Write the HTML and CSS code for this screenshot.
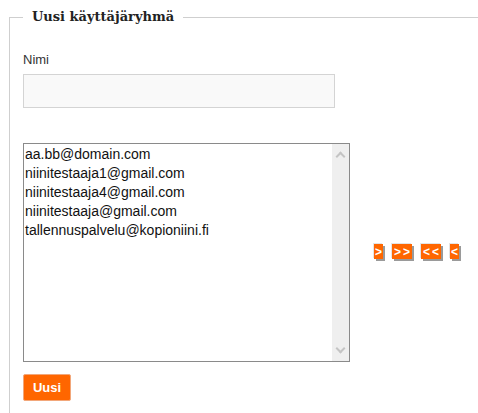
FILE: index.html
```html
<!DOCTYPE html>
<html lang="fi">
<head>
    <meta charset="UTF-8">
    <title>Uusi käyttäjäryhmä</title>
    <link rel="stylesheet" href="styles.css">
</head>
<body>
    <fieldset class="group-form">
        <legend>Uusi käyttäjäryhmä</legend>

        <label class="field-label" for="nimi">Nimi</label>
        <input class="text-input" id="nimi" type="text">

        <div class="member-row">
            <div class="member-list">
                <ul class="members">
                    <li>aa.bb@domain.com</li>
                    <li>niinitestaaja1@gmail.com</li>
                    <li>niinitestaaja4@gmail.com</li>
                    <li>niinitestaaja@gmail.com</li>
                    <li>tallennuspalvelu@kopioniini.fi</li>
                </ul>
                <div class="scrollbar">
                    <span class="arrow up"></span>
                    <span class="arrow down"></span>
                </div>
            </div>

            <div class="move-buttons">
                <button class="move-btn single">&gt;</button>
                <button class="move-btn double">&gt;&gt;</button>
                <button class="move-btn double">&lt;&lt;</button>
                <button class="move-btn single">&lt;</button>
            </div>
        </div>

        <button class="submit-btn">Uusi</button>
    </fieldset>
</body>
</html>
```

FILE: styles.css
```css
body {
    margin: 0;
    padding: 9px 0 0 9px;
    font-family: "Liberation Sans", Arial, sans-serif;
    background: #fff;
}

.group-form {
    margin: 0;
    padding: 14px 13px 12px 13px;
    border: 1px solid #cfcfcf;
    border-right: none;
    border-bottom: none;
    display: flex;
    flex-direction: column;
    align-items: flex-start;
}

.group-form legend {
    margin-left: 0;
    padding: 0 9px;
    font-family: "DejaVu Serif", Georgia, serif;
    font-weight: bold;
    font-size: 13px;
    color: #222;
    line-height: 16px;
}

.field-label {
    font-size: 13px;
    color: #333;
    line-height: 15px;
    margin-top: 13px;
}

.text-input {
    margin-top: 7px;
    width: 312px;
    height: 34px;
    box-sizing: border-box;
    border: 1px solid #d4d4d4;
    background: #f9f9f9;
}

.member-row {
    margin-top: 35px;
    display: flex;
    align-items: center;
    gap: 24px;
}

.member-list {
    width: 327px;
    height: 219px;
    box-sizing: border-box;
    border: 1px solid #8a8a8a;
    display: flex;
}

.members {
    list-style: none;
    margin: 0;
    padding: 1px 0 0 1px;
    flex: 1;
    font-size: 14px;
    line-height: 19px;
    color: #111;
}

.scrollbar {
    width: 17px;
    background: #efefef;
    display: flex;
    flex-direction: column;
    justify-content: space-between;
    align-items: center;
    padding: 6px 0;
}

.arrow {
    width: 5px;
    height: 5px;
    border-left: 2px solid #c4c4c4;
    border-top: 2px solid #c4c4c4;
}

.arrow.up {
    transform: translateY(3px) rotate(45deg);
}

.arrow.down {
    transform: translateY(-3px) rotate(225deg);
}

.move-buttons {
    display: flex;
    gap: 9px;
    margin-top: -2px;
}

.move-btn {
    margin: 0;
    padding: 0;
    height: 15px;
    border: none;
    background: #ff6600;
    color: #fff;
    font-family: "Liberation Sans", Arial, sans-serif;
    font-weight: bold;
    font-size: 12px;
    text-align: center;
    box-shadow: 2px 2px 0 #9a9a9a, -1px -1px 0 #e4e4e4;
}

.move-btn.single {
    width: 9px;
}

.move-btn.double {
    width: 20px;
    letter-spacing: 2px;
    text-indent: 2px;
}

.submit-btn {
    margin-top: 12px;
    width: 48px;
    height: 27px;
    border: 1px solid #f2a77a;
    border-radius: 2px;
    background: #ff6600;
    color: #fff;
    font-family: "Liberation Sans", Arial, sans-serif;
    font-weight: bold;
    font-size: 13px;
}
```
